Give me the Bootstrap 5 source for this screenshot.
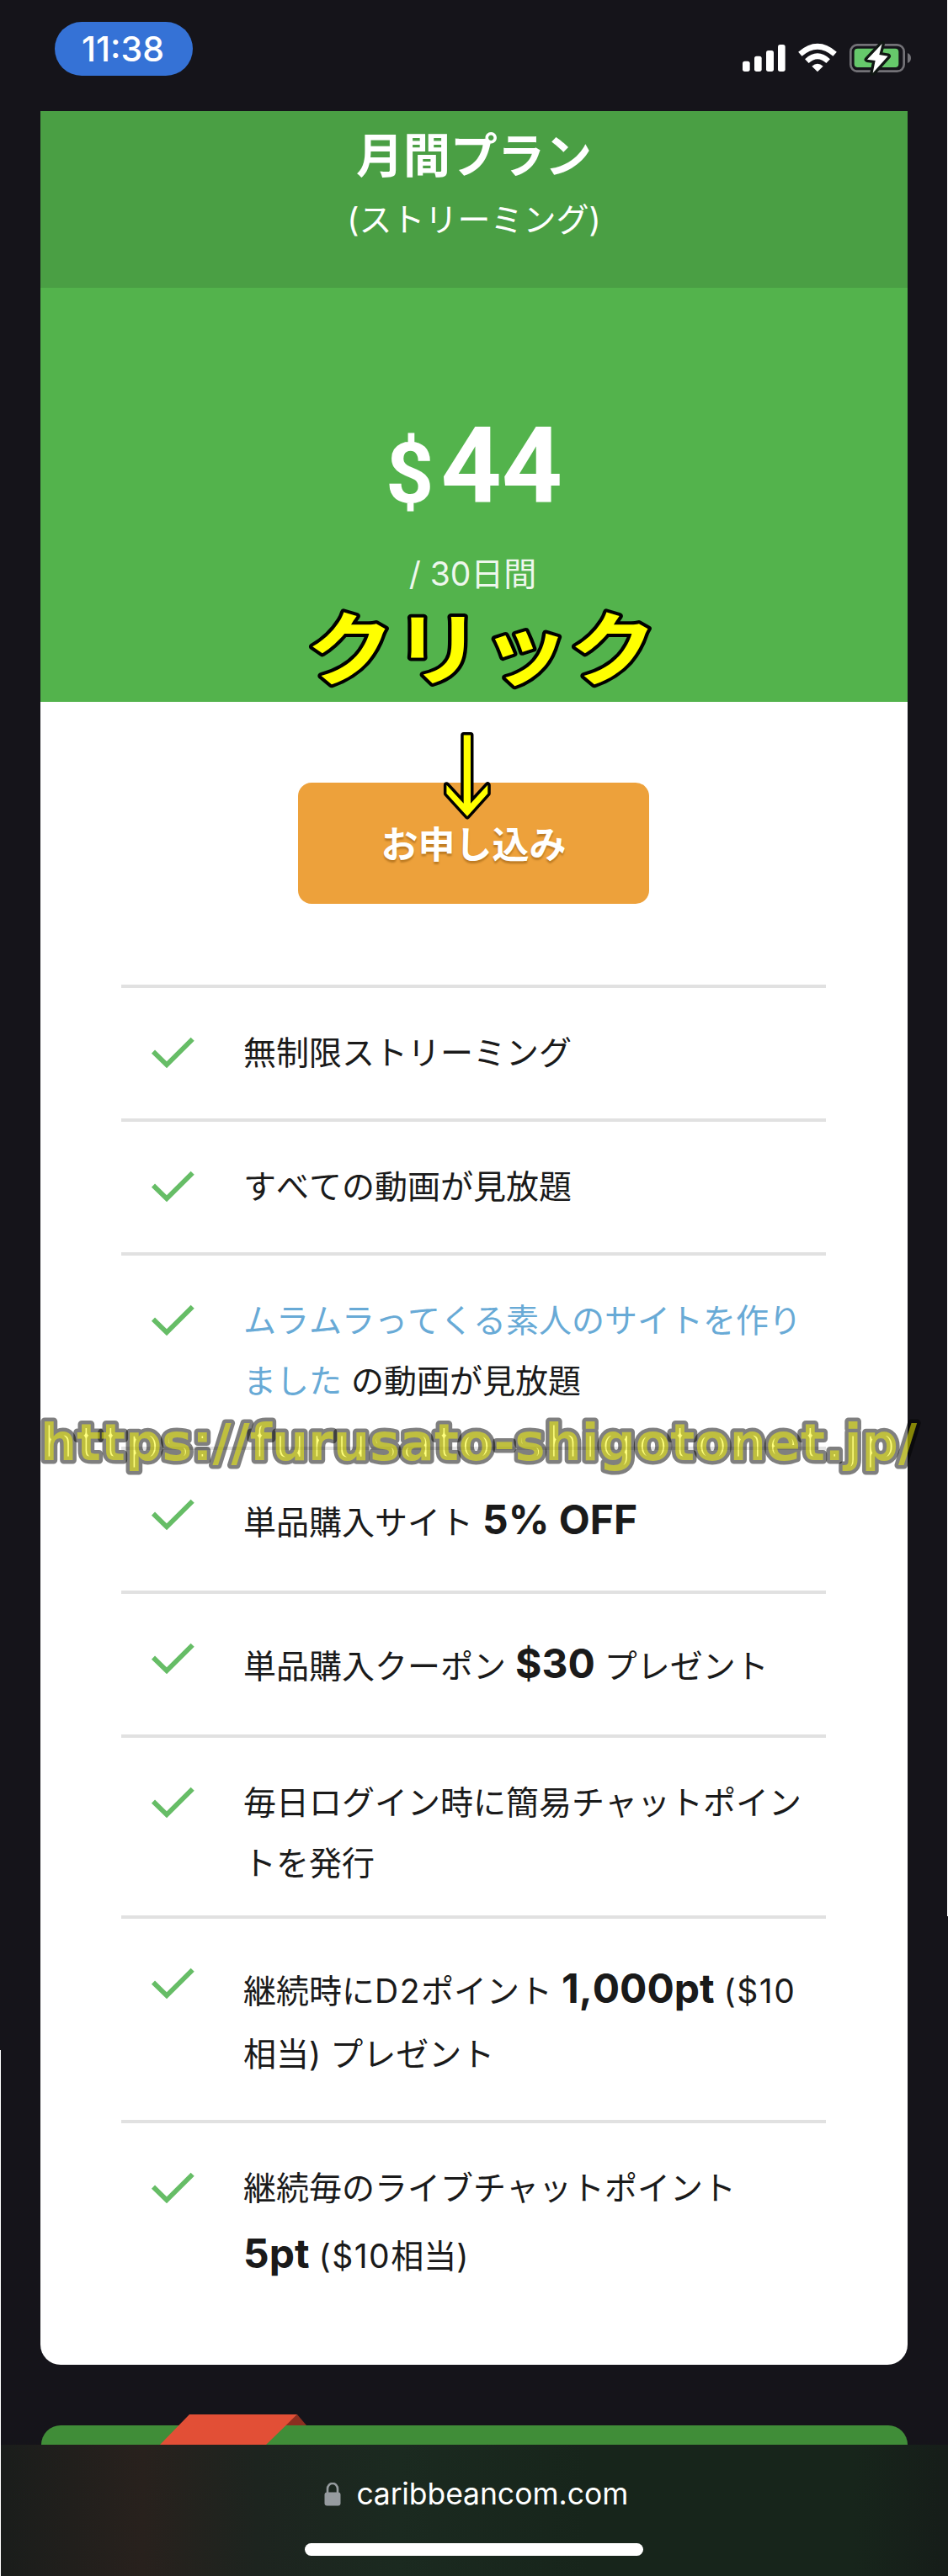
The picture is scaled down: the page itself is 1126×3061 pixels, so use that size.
<!DOCTYPE html>
<html lang="ja">
<head>
  <meta charset="UTF-8">
  <title>月間プラン</title>
  <meta name="viewport" content="width=device-width, initial-scale=1">
  <!-- Bootstrap 5 CDN -->
  <link href="https://cdn.jsdelivr.net/npm/bootstrap@5.3.0/dist/css/bootstrap.min.css" rel="stylesheet">
  <style>
    body {
      background: #15141a;
      color: #1a1a1a;
      font-family: Inter, "Noto Sans CJK JP", sans-serif;
      font-size: 39px;
      line-height: 72px;
      font-kerning: none;
    }
    .screen { width: 1126px; height: 3061px; }
    /* hairlines on the outer edges */
    .screen::before, .screen::after { content: ""; position: absolute; width: 1px; background: #fff; z-index: 1; }
    .screen::before { right: 0; top: 0; height: 2277px; }
    .screen::after { left: 0; top: 2436px; bottom: 0; }
    .status-bar { height: 132px; padding: 26px 26px 0 65px; }
    .clock {
      width: 164px; height: 64px; line-height: 64px;
      background: #3572d6; font-size: 41px; font-weight: 500; padding-right: 2px;
    }
    .status-icons { margin-top: 4px; }

    .plan { width: 1030px; margin-left: 48px; height: 2678px; border-radius: 0 0 24px 24px; }
    .plan-head { background: #4a9f44; height: 210px; padding-top: 14px; }
    .plan-title { font-size: 56px; line-height: 78px; font-weight: 700; }
    .plan-sub { line-height: 74px; }
    .plan-price { background: #53b34c; height: 492px; padding-top: 147px; }
    .amount { font-family: Roboto, sans-serif; font-size: 126px; line-height: 130px; font-weight: 700; }
    .amount .currency { font-size: 100px; line-height: 1; margin-right: 8px; }
    .term { line-height: 60px; margin-top: 33px; padding-right: 3px; opacity: .9; }

    .btn-apply, .btn-apply:hover {
      width: 417px; height: 144px; margin: 96px 1px 0 0;
      background: #eda13b; border: 0; border-radius: 16px;
      color: #fff; font-size: 44px; font-weight: 700; padding-top: 9px;
      text-shadow: 0 3px 2px rgba(120, 70, 0, .4);
    }

    .features { width: 837px; margin: 96px 0 0 96px; }
    .features li { position: relative; border-top: 4px solid #e1e1e1; padding: 41px 0 42px 145px; }
    .features .tick { position: absolute; left: 34px; top: 54px; }
    .features strong { font-size: 48px; line-height: 84px; font-weight: 700; }
    .features .r-two { padding-bottom: 26px; }
    .features .price { letter-spacing: 1.500px; }
    .features a { color: #68aad6; text-decoration: none; }

    .click-note { position: absolute; left: 360px; top: 698px; }
    .click-note text {
      font-family: "Noto Sans CJK JP", sans-serif; font-size: 95px; font-weight: 700;
      fill: #ff0; stroke: #000; stroke-width: 8px; stroke-linejoin: round; paint-order: stroke;
    }
    .click-arrow { position: absolute; left: 525px; top: 868px; }
    .site-mark { position: absolute; left: 44px; top: 1669px; }
    .site-mark text {
      font-family: "DejaVu Sans", sans-serif; font-size: 60px; font-weight: 700;
      fill: rgba(255, 255, 0, .5); stroke: rgba(0, 0, 0, .5); stroke-width: 9px;
      stroke-linejoin: round; paint-order: stroke;
    }

    .next-plan { margin: 72px 0 0 49px; width: 1029px; height: 23px; background: #408d38; border-radius: 24px 24px 0 0; }
    .ribbon { position: absolute; left: 140px; top: -13px; }
    .browser-bar {
      height: 156px; padding-top: 28px;
      background: linear-gradient(90deg, #1a1d1b 0, #28211d 15%, #1d241f 27%, #1b2a20 42%, #17251b 62%, #17251b 90%, #161d19 100%);
    }
    .address { font-size: 35.500px; line-height: 62px; gap: 19px; padding-left: 5px; }
    .home-line { width: 402px; height: 15px; margin-top: 27px; }
  </style>
</head>
<body>
  <svg width="0" height="0" class="position-absolute">
    <symbol id="tick" viewBox="0 0 54 44">
      <path d="M4 21.7 20 37.3 50.7 6.7" fill="none" stroke="#66bd66" stroke-width="5.8"/>
    </symbol>
  </svg>

  <div class="screen position-relative overflow-hidden">
    <div class="status-bar d-flex justify-content-between align-items-start">
      <div class="clock rounded-pill text-white text-center">11:38</div>
      <svg class="status-icons" width="240" height="80" viewBox="0 0 720 240">
        <g fill="#fff">
          <rect x="66" y="128" width="26" height="37" rx="8"/>
          <rect x="108" y="110" width="26" height="55" rx="8"/>
          <rect x="150" y="90" width="27" height="75" rx="8"/>
          <rect x="192" y="69" width="26" height="96" rx="8"/>
          <path d="M333 166 313 146Q333 128 353 146Z"/>
        </g>
        <g fill="none" stroke="#fff" stroke-width="20">
          <path d="M271 103Q333 49 395 103"/>
          <path d="M295 128Q333 93 371 128"/>
        </g>
        <rect x="451" y="70" width="190" height="94" rx="24" fill="none" stroke="#737277" stroke-width="8"/>
        <rect x="464" y="83" width="158" height="67" rx="12" fill="#66c96b"/>
        <path d="M654 99Q666 104 666 117T654 135Z" fill="#737277"/>
        <path d="M563 66 510 122 539 126 530 170 584 110 553 105Z" fill="#fff" stroke="#101713" stroke-width="20" stroke-linejoin="round" paint-order="stroke"/>
      </svg>
    </div>

    <div class="plan bg-white">
      <div class="plan-head text-white text-center">
        <div class="plan-title">月間プラン</div>
        <div class="plan-sub">(ストリーミング)</div>
      </div>
      <div class="plan-price text-white text-center">
        <div class="amount"><span class="currency">$</span>44</div>
        <div class="term">/ 30日間</div>
      </div>
      <div class="text-center lh-1">
        <button type="button" class="btn btn-apply">お申し込み</button>
      </div>
      <ul class="features list-unstyled">
        <li><svg class="tick" width="54" height="44"><use href="#tick"/></svg>無制限ストリーミング</li>
        <li><svg class="tick" width="54" height="44"><use href="#tick"/></svg>すべての動画が見放題</li>
        <li><svg class="tick" width="54" height="44"><use href="#tick"/></svg><a href="#">ムラムラってくる素人のサイトを作り<br>ました</a> の動画が見放題</li>
        <li><svg class="tick" width="54" height="44"><use href="#tick"/></svg>単品購入サイト <strong>5% OFF</strong></li>
        <li><svg class="tick" width="54" height="44"><use href="#tick"/></svg>単品購入クーポン <strong>$30</strong> プレゼント</li>
        <li class="r-two"><svg class="tick" width="54" height="44"><use href="#tick"/></svg>毎日ログイン時に簡易チャットポイン<br>トを発行</li>
        <li><svg class="tick" width="54" height="44"><use href="#tick"/></svg>継続時に<span class="price">D2</span>ポイント <strong>1,000pt</strong> <span class="price">($10</span><br>相当) プレゼント</li>
        <li><svg class="tick" width="54" height="44"><use href="#tick"/></svg>継続毎のライブチャットポイント<br><strong>5pt</strong> <span class="price">($10</span>相当)</li>
      </ul>
    </div>

    <div class="next-plan position-relative">
      <svg class="ribbon" width="176" height="36" viewBox="0 0 176 36">
        <path d="M164 0 175 13H150Z" fill="#8c2f20"/>
        <path d="M36 0H164L127 36H1Z" fill="#e24f36"/>
      </svg>
    </div>
    <div class="browser-bar text-white">
      <div class="address d-flex justify-content-center align-items-center">
        <svg width="20" height="28" viewBox="0 0 20 28">
          <path d="M4 13V7.500a6 6.500 0 0 1 12 0V13" fill="none" stroke="#969b9f" stroke-width="2.600"/>
          <rect x="0.500" y="11.500" width="19" height="16" rx="3" fill="#969b9f"/>
        </svg>
        <span>caribbeancom.com</span>
      </div>
      <div class="home-line bg-white rounded-pill mx-auto"></div>
    </div>

    <!-- notes drawn over the page -->
    <svg class="click-note" width="424" height="150">
      <text x="4" y="109" textLength="416" lengthAdjust="spacingAndGlyphs">クリック</text>
    </svg>
    <svg class="click-arrow" width="60" height="108" viewBox="525 868 60 108">
      <path d="M550.700 873.500H559V954.700L579.300 932.700V942.900L555 970 530.400 942.900V932.700L550.700 954.700Z" fill="#ff0" stroke="#000" stroke-width="7" stroke-linejoin="round" paint-order="stroke"/>
    </svg>
    <svg class="site-mark" width="1060" height="100">
      <text x="4" y="66" textLength="1041" lengthAdjust="spacingAndGlyphs">https://furusato-shigotonet.jp/</text>
    </svg>
  </div>

  <!-- Bootstrap 5 JS -->
  <script src="https://cdn.jsdelivr.net/npm/bootstrap@5.3.0/dist/js/bootstrap.bundle.min.js"></script>
</body>
</html>
